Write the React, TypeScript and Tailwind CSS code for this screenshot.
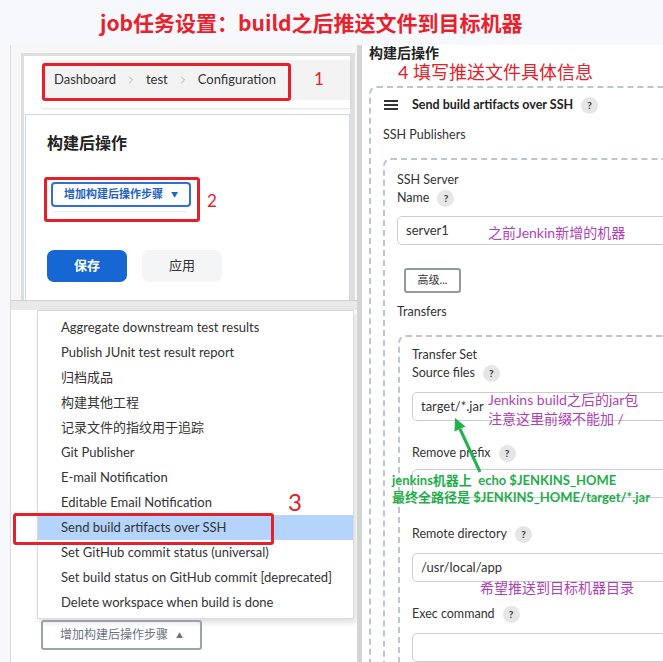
import React from 'react';
import { ChevronRight } from 'lucide-react';

const menuItems = [
  'Aggregate downstream test results',
  'Publish JUnit test result report',
  '归档成品',
  '构建其他工程',
  '记录文件的指纹用于追踪',
  'Git Publisher',
  'E-mail Notification',
  'Editable Email Notification',
  'Send build artifacts over SSH',
  'Set GitHub commit status (universal)',
  'Set build status on GitHub commit [deprecated]',
  'Delete workspace when build is done',
];

function Help() {
  return (
    <span className="ml-[8px] inline-flex h-[17px] w-[17px] items-center justify-center rounded-full bg-[#e6e6e6] text-[10px] font-bold text-[#333]">
      ?
    </span>
  );
}

function Label({ text, help = false }: { text: string; help?: boolean }) {
  return (
    <div className="flex h-[18px] items-center text-[12.5px] text-[#333]">
      {text}
      {help && <Help />}
    </div>
  );
}

function Field({ value = '', className = '' }: { value?: string; className?: string }) {
  return (
    <div
      className={`flex h-[29px] w-[320px] items-center rounded-[5px] border border-[#c9cdd2] bg-white pl-[8px] text-[13px] text-[#333] ${className}`}
    >
      {value}
    </div>
  );
}

function TopPanel() {
  return (
    <div className="ml-[10px] h-[255px] border-l border-[#d9d9d9] bg-[#f7f7f7] pl-[10px] pr-[2px] pt-[8px]">
      <div className="flex h-full flex-col border-l-[3px] border-r-[5px] border-t-[3px] border-[#dedede] bg-white">
        {/* breadcrumb */}
        <div className="relative ml-[18px] mt-[4px] h-[48px] bg-white shadow-[0_1px_2px_rgba(0,0,0,0.12)]">
          <div className="flex h-[40px] items-center bg-[#f3f3f4] pl-[12px] text-[13px] text-[#333]">
            <span>Dashboard</span>
            <ChevronRight size={12} strokeWidth={1.5} className="mx-[9px] text-[#999]" />
            <span>test</span>
            <ChevronRight size={12} strokeWidth={1.5} className="mx-[9px] text-[#999]" />
            <span>Configuration</span>
          </div>
          <div className="absolute left-0 top-[3px] h-[38px] w-[249px] rounded-[3px] border-[3px] border-[#e4202a]" />
          <span className="absolute left-[272px] top-[6px] text-[17px] text-[#e4202a]">1</span>
        </div>

        {/* post-build section */}
        <div className="ml-[1px] mt-[6px] flex-1 border border-b-0 border-[#c7dbf4] bg-white pl-[21px] pt-[17px]">
          <div className="flex h-[22px] items-center text-[16px] font-bold text-[#222]">构建后操作</div>
          <div className="-ml-[3px] mt-[23px] flex items-center">
            <div className="h-[45px] w-[156px] rounded-[3px] border-[3px] border-[#e4202a] pl-[4px] pt-[2px]">
              <div className="flex h-[25px] w-[140px] items-center justify-center gap-[8px] rounded-[4px] border-[2px] border-[#2f6fd6] text-[11px] font-semibold text-[#1f5fc8]">
                增加构建后操作步骤
                <span className="text-[7px]">▼</span>
              </div>
              <div className="ml-[2px] mt-[4px] h-px w-[134px] bg-[#e3ecf7]" />
            </div>
            <span className="ml-[7px] mt-[2px] text-[17px] text-[#e4202a]">2</span>
          </div>
          <div className="mt-[28px] flex gap-[15px]">
            <div className="flex h-[32px] w-[80px] items-center justify-center rounded-[7px] bg-[#1666d3] text-[13px] font-bold text-white">
              保存
            </div>
            <div className="flex h-[32px] w-[80px] items-center justify-center rounded-[7px] bg-[#f4f5f7] text-[13px] text-[#333]">
              应用
            </div>
          </div>
        </div>
      </div>
    </div>
  );
}

function MenuPanel() {
  return (
    <div className="relative ml-[10px] flex flex-1 flex-col border-l border-[#d9d9d9] bg-white">
      <div className="h-[10px] border-t border-[#cfcfcf] bg-[#e9e9e9]" />
      <div className="ml-[26px] mr-[3px] border border-[#dcdcdc] bg-white pb-[3px] pt-[4px] shadow-[2px_3px_6px_rgba(0,0,0,0.15)]">
        {menuItems.map((item) => (
          <div
            key={item}
            className={`flex h-[25px] items-center pl-[23px] text-[13px] text-[#333] ${
              item === 'Send build artifacts over SSH' ? 'bg-[#b5d4fb]' : ''
            }`}
          >
            {item}
          </div>
        ))}
      </div>
      <div className="ml-[30px] mt-[1px] flex h-[30px] w-[161px] items-center justify-center gap-[8px] rounded-[3px] border-[2px] border-[#9aa3ad] text-[12px] text-[#6b7280]">
        增加构建后操作步骤
        <span className="text-[7px]">▲</span>
      </div>
      <div className="absolute left-[2px] top-[213px] h-[32px] w-[261px] rounded-[3px] border-[3px] border-[#e4202a]" />
      <span className="absolute left-[277px] top-[184px] text-[24px] text-[#e4202a]">3</span>
    </div>
  );
}

function RightPanel() {
  return (
    <div className="relative flex-1 overflow-hidden border-l-[5px] border-[#d4d4d4] bg-white pl-[7px]">
      <div className="h-[15px] text-[14px] font-bold leading-[15px] text-[#222]">构建后操作</div>
      <div className="ml-[29px] mt-[1px] h-[22px] text-[18px] leading-[22px] text-[#e4202a]">4 填写推送文件具体信息</div>

      {/* Send build artifacts over SSH */}
      <div className="mt-[3px] w-[330px] rounded-[8px] border-[2px] border-dashed border-[#bfc5cc] pb-[20px] pl-[12px] pt-[8px]">
        <div className="flex h-[18px] items-center">
          <svg width="14" height="12" viewBox="0 0 14 12" className="ml-[1px]">
            <rect x="0" y="1" width="14" height="2" fill="#333" />
            <rect x="0" y="5" width="14" height="2" fill="#333" />
            <rect x="0" y="9" width="14" height="2" fill="#333" />
          </svg>
          <span className="ml-[14px] text-[12.5px] font-bold text-[#222]">Send build artifacts over SSH</span>
          <Help />
        </div>
        <div className="mt-[12px]">
          <Label text="SSH Publishers" />
        </div>

        {/* SSH server */}
        <div className="mt-[14px] rounded-[8px] border-[2px] border-dashed border-[#bfc5cc] pb-[20px] pl-[12px] pt-[11px]">
          <Label text="SSH Server" />
          <Label text="Name" help />
          <Field value="server1" className="mt-[9px] h-[27px]" />
          <div className="ml-[7px] mt-[23px] flex h-[25px] w-[57px] items-center justify-center rounded-[3px] border-[2px] border-[#8e9aa6] text-[11px] text-[#333]">
            高级...
          </div>
          <div className="mt-[10px]">
            <Label text="Transfers" />
          </div>

          {/* Transfer set */}
          <div className="ml-[1px] mt-[14px] rounded-[8px] border-[2px] border-dashed border-[#bfc5cc] pb-[20px] pl-[12px] pt-[9px]">
            <Label text="Transfer Set" />
            <Label text="Source files" help />
            <Field value="target/*.jar" className="mt-[10px]" />
            <div className="mt-[23px]">
              <Label text="Remove prefix" help />
            </div>
            <Field className="mt-[7px]" />
            <div className="mt-[27px]">
              <Label text="Remote directory" help />
            </div>
            <Field value="/usr/local/app" className="mt-[10px]" />
            <div className="mt-[23px]">
              <Label text="Exec command" help />
            </div>
            <Field className="mt-[10px]" />
          </div>
        </div>
      </div>

      {/* annotations */}
      <div className="absolute left-[126px] top-[178px] text-[14px] leading-[19px] text-[#b03fb5]">之前Jenkin新增的机器</div>
      <div className="absolute left-[126px] top-[345px] text-[14px] leading-[19px] text-[#b03fb5]">
        Jenkins build之后的jar包
        <br />
        注意这里前缀不能加 /
      </div>
      <div className="absolute left-[118px] top-[533px] text-[14px] leading-[19px] text-[#b03fb5]">希望推送到目标机器目录</div>
      <svg className="absolute left-[83px] top-[365px]" width="45" height="70" viewBox="0 0 45 70">
        <line x1="15" y1="19" x2="35" y2="62" stroke="#22b14c" strokeWidth="3" />
        <polygon points="10,8 20.5,16.4 9.5,21.4" fill="#22b14c" />
      </svg>
      <div className="absolute left-[30px] top-[427px] whitespace-nowrap text-[13px] font-bold leading-[17px] text-[#1fae4b]">
        jenkins机器上&nbsp;&nbsp;echo $JENKINS_HOME
        <br />
        最终全路径是 $JENKINS_HOME/target/*.jar
      </div>
    </div>
  );
}

export default function App() {
  return (
    <div className="relative h-[662px] w-[663px] overflow-hidden bg-[#f7f8fc] font-['Lato','Noto_Sans_CJK_SC',sans-serif] text-[#333]">
      <h1 className="h-[45px] pl-[100px] pt-[9px] font-['Noto_Sans_CJK_SC',sans-serif] text-[21px] font-bold leading-[26px] text-[#e8222c]">
        job任务设置：build之后推送文件到目标机器
      </h1>
      <div className="flex h-[617px]">
        <div className="flex w-[357px] flex-col">
          <TopPanel />
          <MenuPanel />
        </div>
        <RightPanel />
      </div>
    </div>
  );
}
